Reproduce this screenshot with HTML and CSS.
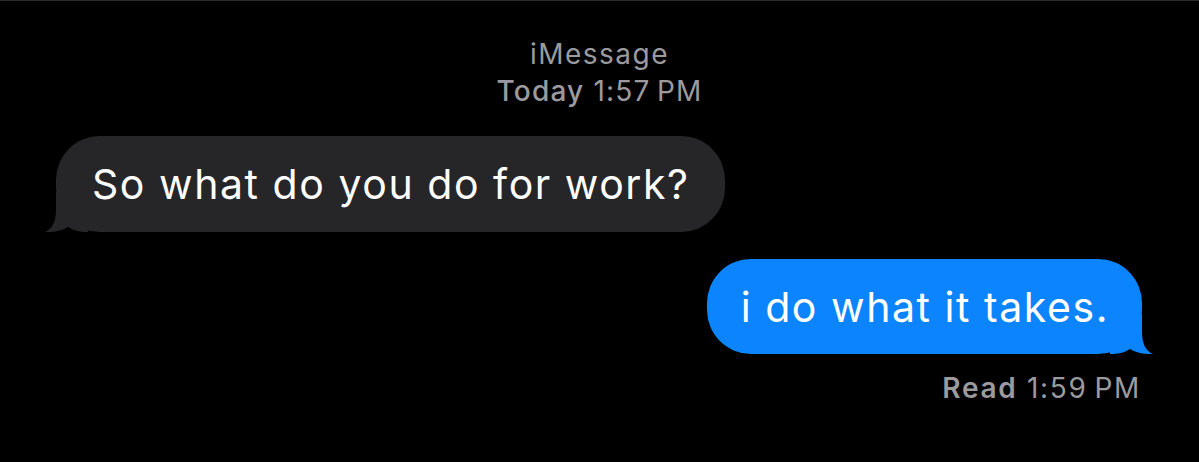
FILE: index.html
```html
<!DOCTYPE html>
<html lang="en">
<head>
<meta charset="utf-8">
<title>iMessage</title>
<link rel="stylesheet" href="styles.css">
</head>
<body>
<main class="thread">
  <header class="stamp">
    <div class="stamp-service">iMessage</div>
    <div class="stamp-time"><span class="medium">Today</span> 1:57&#8239;PM</div>
  </header>

  <div class="row row-in">
    <div class="bubble bubble-in">
      <span class="bubble-text">So what do you do for work?</span>
      <svg class="tail tail-in" viewBox="0 0 44 40" width="44" height="40" aria-hidden="true">
        <path d="M12 0 L12 18 C12 30 8 37 1 40 C10 40.5 18 38.5 24 35 C30 39 36 40 44 40 L44 0 Z"/>
      </svg>
    </div>
  </div>

  <div class="row row-out">
    <div class="bubble bubble-out">
      <span class="bubble-text">i do what it takes.</span>
      <svg class="tail tail-out" viewBox="0 0 44 40" width="44" height="40" aria-hidden="true">
        <path d="M12 0 L12 18 C12 30 8 37 1 40 C10 40.5 18 38.5 24 35 C30 39 36 40 44 40 L44 0 Z"/>
      </svg>
    </div>
  </div>

  <div class="receipt"><span class="strong">Read</span> 1:59&#8239;PM</div>
</main>
</body>
</html>
```

FILE: styles.css
```css
html, body {
  margin: 0;
  padding: 0;
  background: #000;
}

body {
  border-top: 1px solid #2a2a2c;
  height: 461px;
  overflow: hidden;
  font-family: "Inter", "Liberation Sans", sans-serif;
  -webkit-font-smoothing: antialiased;
}

.thread {
  display: flex;
  flex-direction: column;
}

.stamp {
  padding-top: 35px;
  display: flex;
  flex-direction: column;
  align-items: center;
  color: #9a9a9f;
  font-size: 28px;
  line-height: 37px;
  letter-spacing: 1.2px;
}

.stamp-service {
  letter-spacing: 1.5px;
}

.medium {
  font-weight: 500;
}

.strong {
  font-weight: 600;
}

.row {
  display: flex;
}

.row-in {
  margin-top: 26px;
  padding-left: 56px;
  justify-content: flex-start;
}

.row-out {
  margin-top: 27px;
  padding-right: 57px;
  justify-content: flex-end;
}

.bubble {
  position: relative;
  height: 96px;
  display: flex;
  align-items: center;
  padding: 0 35px 0 36px;
  border-radius: 44px;
  color: #fff;
  font-size: 41px;
  letter-spacing: 1.55px;
}

.bubble-text {
  position: relative;
  z-index: 1;
}

.bubble-in {
  background: #262629;
}

.bubble-out {
  background: #0b84fe;
  height: 95px;
  padding: 0 33px 0 34px;
}

.tail {
  position: absolute;
  bottom: 0;
  display: block;
}

.tail-in {
  left: -12px;
  fill: #262629;
}

.tail-out {
  right: -12px;
  fill: #0b84fe;
  transform: scaleX(-1);
}

.receipt {
  margin-top: 16px;
  padding-right: 58px;
  align-self: flex-end;
  color: #9a9a9f;
  font-size: 28px;
  line-height: 37px;
  letter-spacing: 1.7px;
}
```
